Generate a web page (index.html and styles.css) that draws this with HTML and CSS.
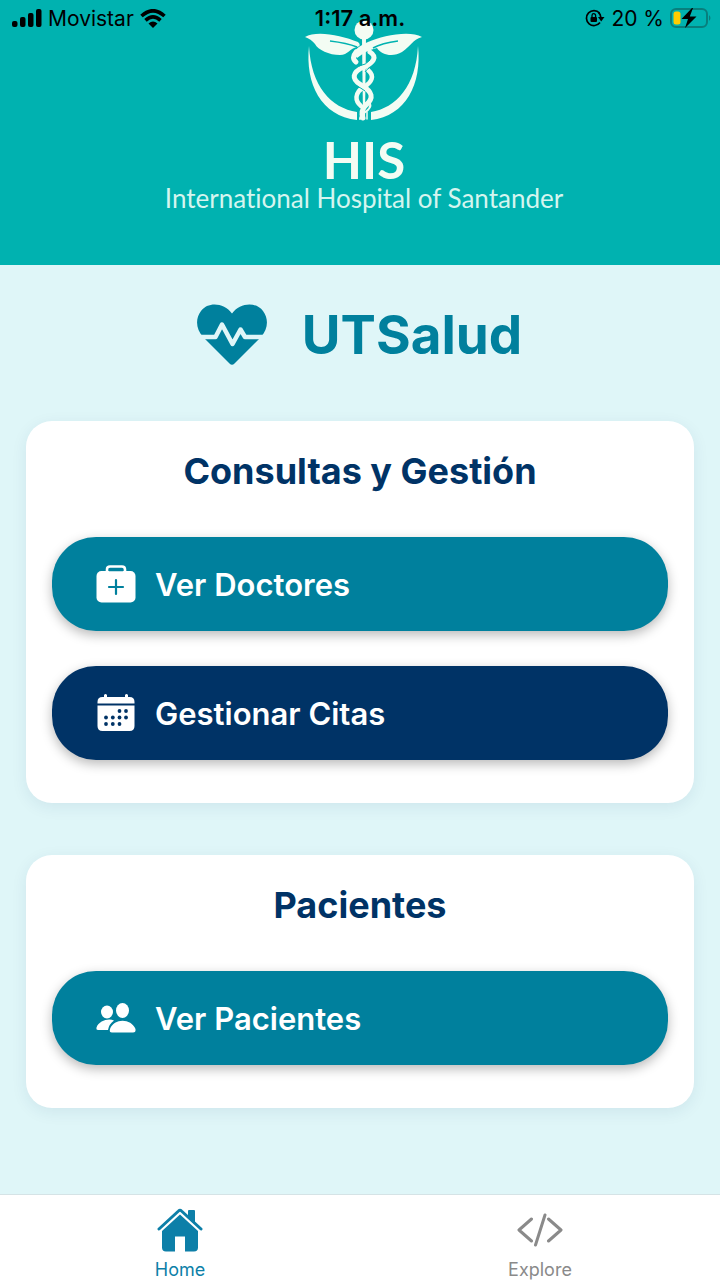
FILE: index.html
```
<!DOCTYPE html>
<html lang="es">
<head>
<meta charset="utf-8">
<meta name="viewport" content="width=device-width, initial-scale=1">
<title>UTSalud</title>
<link rel="stylesheet" href="styles.css">
</head>
<body class="app">
<div class="status">
  <div class="status-side">
    <svg class="signal" viewBox="0 0 30 18" width="30" height="18" aria-hidden="true"><rect x="0" y="12" width="5.500" height="6" rx="2"/><rect x="8" y="8" width="5.500" height="10" rx="2"/><rect x="16" y="4" width="5.500" height="14" rx="2"/><rect x="24" y="0" width="5.500" height="18" rx="2"/></svg>
    <span class="status-text">Movistar</span>
    <svg class="wifi" viewBox="0 0 26 19" width="26" height="19" aria-hidden="true"><path d="M1.500 7Q13-3.500 24.500 7M5.500 11.300Q13 4.500 20.500 11.300" fill="none" stroke="#000" stroke-width="3.600"/><path d="M8.500 14.500Q13 10.500 17.500 14.500L13 19Z"/></svg>
  </div>
  <time class="clock">1:17 a.m.</time>
  <div class="status-side status-right">
    <svg viewBox="0 0 20 18" width="20" height="18" aria-hidden="true"><path d="M14.500 4A7.500 7.500 0 1 0 15 13.500" fill="none" stroke="#000" stroke-width="1.700"/><path d="M13.500 3.500Q16 5.500 16 9" fill="none" stroke="#000" stroke-width="1.700"/><path d="M13 8h6.500l-3.300 4.500z"/><rect x="5.500" y="8" width="6.500" height="5" rx="1"/><path d="M7 8V6.500a1.800 1.800 0 0 1 3.600 0V8" fill="none" stroke="#000" stroke-width="1.300"/></svg>
    <span class="status-text">20 %</span>
    <svg class="battery" viewBox="0 0 42 20" width="42" height="20" aria-hidden="true"><rect x="1" y="1" width="36" height="18" rx="5" fill="none" stroke="#087f7d" stroke-width="2"/><path d="M39 7q3 3 0 6z" fill="#087f7d"/><rect x="3.500" y="3.500" width="7" height="13" rx="2.500" fill="#ffcc00"/><path d="M22 0 11.500 11h6.500L15 20 26.500 8.500h-6.700L23 0z"/></svg>
  </div>
</div>
<header class="hero">
  <svg class="logo" viewBox="305 20 118 104" width="118" height="104" role="img" aria-label="HIS">
    <g fill="#f3fcf3">
      <circle cx="364" cy="30" r="9.500"/>
      <path d="M362 38h4l-1 80h-2z"/>
      <path d="M305 37C316 30 341 35 358 42Q362 46 357 47C350 48 348 55 340 55C329 55 318 50 315 44Q311 39 305 37Z"/>
      <path d="M422 37C409 30 382 36 368 42Q358 46 353 53L357 58Q367 50 377 48C382 56 394 57 402 52C411 46 412 40 422 37Z"/>
      <path d="M309 46C305 84 321 116 357 120V112C331 108 311 86 309 46Z"/>
      <path d="M418 46C422 84 406 116 371 120V112C396 108 416 86 418 46Z"/>
    </g>
    <path d="M330 41Q347 43 357 47M398 41Q382 43 373 48" fill="none" stroke="#00b2b0" stroke-width="1.500"/>
    <g fill="none" stroke="#f3fcf3" stroke-linecap="round" stroke-width="5">
      <path d="M356 52Q351 58 356 62"/>
      <path d="M370 52C378 57 373 63 364 67C352 72 351 79 361 85C373 92 374 98 366 105Q360 111 363 118" />
      <path d="M368 70C375 76 372 82 364 87C354 93 355 101 361 106" stroke-width="4.500"/>
      <path d="M370 103Q372 108 364 113Q360 116 360 119" stroke-width="2"/>
      <path d="M367 112v7" stroke-width="1.500"/>
    </g>
    <path d="M359 66Q366 65 370 60M357 86Q361 88 365 91M369 68Q366 70 365 72" fill="none" stroke="#00b2b0" stroke-width="1"/>
  </svg>
  <div class="brand">HIS</div>
  <div class="tagline">International Hospital of Santander</div>
</header>
<main class="content">
  <h1 class="title">
    <svg viewBox="0 0 72 62" width="72" height="62" aria-hidden="true"><path fill="#00809d" d="M36 9.500C28-1.500 12-2.500 5 7C-1 15 0 25 7 33L33.500 59.500Q36 62 38.500 59.500L65 33C72 25 73 15 67 7C60-2.500 44-1.500 36 9.500Z"/><path d="M0 33H19.500L26 20.500L36.500 40L44.500 25.500L49 33H72" fill="none" stroke="#dff6f8" stroke-width="4.500" stroke-linejoin="round"/></svg>
    <span>UTSalud</span>
  </h1>
  <section class="card">
    <h2 class="card-title">Consultas y Gestión</h2>
    <button class="action" type="button">
      <svg viewBox="0 0 40 40" width="40" height="40" aria-hidden="true"><path d="M11 9V5.500q0-3 3-3h12q3 0 3 3v3.500" fill="none" stroke="#fff" stroke-width="2.600"/><rect x="0.500" y="7" width="39" height="31.500" rx="5" fill="#fff"/><path d="M13 6.500h14" stroke="#00809d" stroke-width="1.500"/><path d="M20 16v14M13 23h14" stroke="#00809d" stroke-width="2.200" stroke-linecap="round"/></svg>
      <span>Ver Doctores</span>
    </button>
    <button class="action action-dark" type="button">
      <svg viewBox="0 0 40 40" width="40" height="40" aria-hidden="true"><path fill="#fff" d="M1.500 10.500V9q0-5 5-5H8V2q1.500-2 3 0V4h18V2q1.500-2 3 0V4h1.500q5 0 5 5v1.500zM1.500 12.500h37V33q0 5-5 5h-27q-5 0-5-5z"/><g fill="#003366"><circle cx="23.500" cy="18" r="1.900"/><circle cx="30" cy="18" r="1.900"/><circle cx="10" cy="24.500" r="1.900"/><circle cx="16.800" cy="24.500" r="1.900"/><circle cx="23.500" cy="24.500" r="1.900"/><circle cx="30" cy="24.500" r="1.900"/><circle cx="10" cy="31" r="1.900"/><circle cx="16.800" cy="31" r="1.900"/><circle cx="23.500" cy="31" r="1.900"/></g></svg>
      <span>Gestionar Citas</span>
    </button>
  </section>
  <section class="card">
    <h2 class="card-title">Pacientes</h2>
    <button class="action" type="button">
      <svg viewBox="0 0 40 40" width="40" height="40" aria-hidden="true"><g fill="#fff"><ellipse cx="11" cy="14" rx="6" ry="6.500"/><ellipse cx="26.500" cy="12.500" rx="6.500" ry="7.500"/><path d="M18 22.500Q13 26 12 32H2Q0 32 .5 29.500C3 23 12 20 18 22.500ZM16 34.500Q13 34.500 14 31C18 20 35 20 39.500 31Q40 34.500 37 34.500Z"/></g></svg>
      <span>Ver Pacientes</span>
    </button>
  </section>
</main>
<nav class="tabs">
  <a class="tab tab-active" href="#home">
    <svg viewBox="0 0 46 46" width="46" height="46" aria-hidden="true"><path d="M2 22 21.500 4Q23 2.500 24.500 4L44 22" fill="none" stroke="currentColor" stroke-width="3" stroke-linecap="round"/><path fill="currentColor" d="M31 10V4q0-1 1-1h5q1 0 1 1v13zM23 7.500 41 24V40.500q0 4-4 4h-9V29.500H18v15H9q-4 0-4-4V24z"/></svg>
    <span>Home</span>
  </a>
  <a class="tab" href="#explore">
    <svg viewBox="0 0 46 46" width="46" height="46" aria-hidden="true"><path d="M14.500 12 2 23 14.500 34M31.500 12 44 23 31.500 34M28 8 18.500 38" fill="none" stroke="currentColor" stroke-width="3" stroke-linecap="round" stroke-linejoin="round"/></svg>
    <span>Explore</span>
  </a>
</nav>
</body>
</html>
```
FILE: styles.css
```
* {
  box-sizing: border-box;
}

.app {
  position: relative;
  display: flex;
  flex-direction: column;
  min-height: 100vh;
  margin: 0;
  background: #dff6f8;
  font-family: Inter, "Liberation Sans", sans-serif;
}

svg {
  display: block;
  flex: none;
}

/* Floats over the hero artwork */
.status {
  position: absolute;
  inset: 0 0 auto;
  z-index: 1;
  display: grid;
  grid-template-columns: 1fr auto 1fr;
  align-items: center;
  height: 36px;
  padding: 0 12px;
  color: #000;
  font-size: 21px;
}

.status-side {
  display: flex;
  align-items: center;
  gap: 6px;
}

.status-right {
  justify-content: flex-end;
  gap: 6px;
  margin-right: -4px;
}

.status-text {
  white-space: nowrap;
}

.clock {
  font-size: 22px;
  font-weight: 600;
}

.hero {
  display: flex;
  flex-direction: column;
  align-items: center;
  padding: 20px 0 52px 8px;
  background: #00b2b0;
  color: #f3fcf3;
  font-family: Lato, sans-serif;
}

.brand {
  margin-top: 12px;
  font-size: 51px;
  font-weight: 700;
  line-height: 48px;
}

.tagline {
  color: #d5f5ef;
  font-size: 26px;
  font-variant-ligatures: none;
  line-height: 29px;
}

.content {
  flex: 1;
  padding: 0 26px 34px;
}

.title {
  display: flex;
  align-items: center;
  justify-content: center;
  gap: 34px;
  margin: 0;
  padding: 35px 2px 51px 0;
  color: #00809d;
  font-size: 53px;
  line-height: 70px;
}

.card {
  margin-bottom: 52px;
  padding: 26px 26px 43px;
  border-radius: 26px;
  background: #fff;
  box-shadow: 0 4px 16px rgba(0, 51, 102, 0.08);
}

.card-title {
  margin: 0 0 42px;
  color: #003366;
  font-size: 36px;
  line-height: 48px;
  text-align: center;
}

.action {
  display: flex;
  align-items: center;
  gap: 19px;
  width: 100%;
  height: 94px;
  padding: 0 44px;
  border: 0;
  border-radius: 44px;
  background: #00809d;
  box-shadow: 0 4px 12px rgba(0, 0, 0, 0.28);
  color: #fff;
  font: 600 31px Inter, "Liberation Sans", sans-serif;
}

.action + .action {
  margin-top: 35px;
}

.action-dark {
  background: #003366;
}

.tabs {
  display: grid;
  grid-template-columns: 1fr 1fr;
  border-top: 1px solid #d5e3e6;
  background: #fff;
}

.tab {
  display: flex;
  flex-direction: column;
  align-items: center;
  gap: 5px;
  padding: 12px 0 0;
  color: #8a8a8a;
  font-size: 18px;
  line-height: 23px;
  text-decoration: none;
}

.tab-active {
  color: #0d7fa8;
}
```
